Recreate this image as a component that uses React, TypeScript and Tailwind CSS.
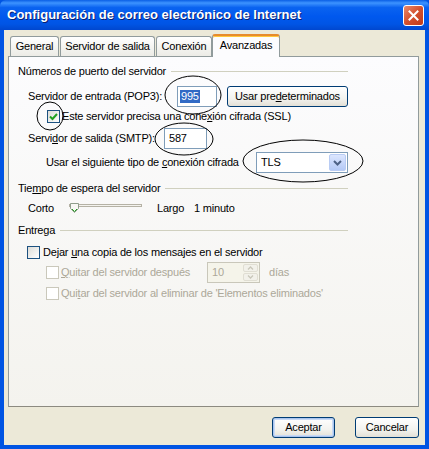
import React from "react";

function Check({ checked = false, disabled = false }: { checked?: boolean; disabled?: boolean }) {
  return (
    <span
      className={
        disabled
          ? "w-[13px] h-[13px] border border-[#CAC8BB] bg-white shrink-0 flex items-center justify-center"
          : "w-[13px] h-[13px] border border-[#1C5180] bg-[linear-gradient(135deg,#DCDCD7,#FFFFFF)] shrink-0 flex items-center justify-center"
      }
    >
      {checked && (
        <svg width="9" height="9" viewBox="0 0 9 9">
          <path d="M1 4.5 L3.5 7 L8 2" fill="none" stroke="#21A121" strokeWidth="2" />
        </svg>
      )}
    </span>
  );
}

function GroupTitle({ children, className = "" }: { children: React.ReactNode; className?: string }) {
  return (
    <div className={"h-[14px] flex items-center " + className}>
      <span className="whitespace-nowrap">{children}</span>
      <span className="flex-1 h-px bg-[#D0D0BF] ml-[5px]" />
    </div>
  );
}

function XpButton({ children, isDefault = false, className = "" }: { children: React.ReactNode; isDefault?: boolean; className?: string }) {
  return (
    <div
      className={
        "h-[21px] rounded-[3px] border border-[#003C74] bg-[linear-gradient(to_bottom,#FFFFFF,#F3F3EF_60%,#E3E0D6)] flex items-center justify-center " +
        (isDefault ? "shadow-[inset_0_0_0_1px_#A9C4EE,inset_0_0_0_2px_#C9DAF5] " : "") +
        className
      }
    >
      {children}
    </div>
  );
}

export default function App() {
  return (
    <div className="relative w-[429px] h-[449px] overflow-hidden bg-[#0054E3] flex flex-col font-['Liberation_Sans',Arial,sans-serif] text-[11px] tracking-[-0.2px] text-black">
      {/* Title bar */}
      <div className="h-[30px] shrink-0 flex items-center justify-between pl-[7px] pr-[5px] rounded-t-[6px] bg-[linear-gradient(to_bottom,#0A5FE5_0%,#3D93FF_10%,#0A63F0_25%,#0058EE_55%,#0055E5_80%,#0047CF_100%)]">
        <span className="text-white font-bold text-[13px] tracking-normal [text-shadow:1px_1px_0_#0A1E6E]">
          Configuración de correo electrónico de Internet
        </span>
        <div className="w-[21px] h-[21px] rounded-[3px] border border-white bg-[linear-gradient(135deg,#E98A6C,#D3502E_50%,#C23A19)] flex items-center justify-center">
          <svg width="11" height="11" viewBox="0 0 11 11">
            <path d="M1.5 1.5 L9.5 9.5 M9.5 1.5 L1.5 9.5" stroke="white" strokeWidth="2" strokeLinecap="square" />
          </svg>
        </div>
      </div>

      {/* Body */}
      <div className="flex-1 ml-[4px] mr-[4px] mb-[4px] bg-[#ECE9D8] flex flex-col">
        <div className="ml-[4px] mr-[6px] pt-[4px]">
          {/* Tabs */}
          <div className="relative z-10 h-[23px] flex items-end pl-[2px]">
            <div className="w-[49px] h-[20px] mb-[1px] border border-b-0 border-[#919B9C] rounded-t-[3px] bg-[linear-gradient(to_bottom,#FFFFFF,#F3F3EF_60%,#ECEBE6)] flex items-center justify-center">
              General
            </div>
            <div className="w-[95px] h-[20px] mb-[1px] ml-[1px] border border-b-0 border-[#919B9C] rounded-t-[3px] bg-[linear-gradient(to_bottom,#FFFFFF,#F3F3EF_60%,#ECEBE6)] flex items-center justify-center">
              Servidor de salida
            </div>
            <div className="w-[56px] h-[20px] mb-[1px] ml-[1px] border border-b-0 border-[#919B9C] rounded-t-[3px] bg-[linear-gradient(to_bottom,#FFFFFF,#F3F3EF_60%,#ECEBE6)] flex items-center justify-center">
              Conexión
            </div>
            <div className="w-[68px] h-[23px] border border-b-0 border-[#919B9C] border-t-[#E68B2C] border-t-2 rounded-t-[3px] bg-[#FCFCFE] shadow-[inset_0_1px_0_#FFC83C] flex items-center justify-center pb-[2px]">
              Avanzadas
            </div>
          </div>

          {/* Panel */}
          <div className="-mt-[1px] h-[351px] border border-[#919B9C] border-b-[#8C8A80] bg-[linear-gradient(to_bottom,#FCFCFE,#F4F3EE)]">
            <div className="w-[339px] pl-[9px] pt-[7px] flex flex-col">
              <GroupTitle>Números de puerto del servidor</GroupTitle>

              <div className="mt-[8px] h-[21px] flex items-center pl-[10px]">
                <span className="w-[149px]">Servidor de entrada (POP3):</span>
                <div className="w-[40px] h-[21px] border border-[#7F9DB9] bg-white flex items-center pl-[2px]">
                  <span className="bg-[#316AC5] text-white px-[1px] leading-[13px]">995</span>
                </div>
                <XpButton className="ml-[10px] w-[121px]">
                  <span>
                    Usar pre<span className="underline">d</span>eterminados
                  </span>
                </XpButton>
              </div>

              <div className="mt-[3px] h-[13px] flex items-center pl-[29px]">
                <Check checked />
                <span className="ml-[2px]">
                  Este servidor precisa una cone<span className="underline">x</span>ión cifrada (SSL)
                </span>
              </div>

              <div className="mt-[5px] h-[21px] flex items-center pl-[10px]">
                <span className="w-[136px]">
                  Servi<span className="underline">d</span>or de salida (SMTP):
                </span>
                <div className="w-[43px] h-[21px] border border-[#7F9DB9] bg-white flex items-center pl-[4px]">587</div>
              </div>

              <div className="mt-[3px] h-[21px] flex items-center pl-[28px]">
                <span className="w-[210px]">
                  Usar el siguiente tipo de <span className="underline">c</span>onexión cifrada
                </span>
                <div className="w-[92px] h-[21px] border border-[#7F9DB9] bg-white flex items-center justify-between pl-[4px] pr-[1px]">
                  <span>TLS</span>
                  <span className="w-[17px] h-[17px] rounded-[2px] border border-[#B9CCF4] bg-[linear-gradient(to_bottom,#DCE6FE,#B4C9F6)] flex items-center justify-center">
                    <svg width="9" height="6" viewBox="0 0 9 6">
                      <path d="M1 1 L4.5 4.5 L8 1" fill="none" stroke="#4D6185" strokeWidth="2" />
                    </svg>
                  </span>
                </div>
              </div>

              <GroupTitle className="mt-[8px]">
                Tie<span className="underline">m</span>po de espera del servidor
              </GroupTitle>

              <div className="mt-[6px] h-[14px] flex items-center pl-[10px]">
                <span className="w-[41px]">Corto</span>
                <svg width="73" height="12" viewBox="0 0 73 12">
                  <rect x="0.5" y="2.5" width="72" height="2" fill="#F4F3EE" stroke="#B5B2A5" strokeWidth="1" />
                  <path d="M1.5 1.5 H9.5 V6.5 L5.5 10.5 L1.5 6.5 Z" fill="#F7F7F4" stroke="#8F9D8B" strokeWidth="1" />
                  <path d="M3 7 L5.5 9.5 L8 7" fill="none" stroke="#21A121" strokeWidth="1" />
                </svg>
                <span className="ml-[15px] w-[37px]">Largo</span>
                <span>1 minuto</span>
              </div>

              <GroupTitle className="mt-[8px]">Entrega</GroupTitle>

              <div className="mt-[9px] h-[13px] flex items-center pl-[9px]">
                <Check />
                <span className="ml-[3px]">
                  Dejar <span className="underline">u</span>na copia de los mensajes en el servidor
                </span>
              </div>

              <div className="mt-[3px] h-[21px] flex items-center pl-[28px] text-[#ACA899]">
                <Check disabled />
                <span className="ml-[2px] w-[146px]">
                  <span className="underline">Q</span>uitar del servidor después
                </span>
                <div className="w-[53px] h-[21px] border border-[#C9C7BA] bg-[#F5F4EA] flex items-center justify-between pl-[4px] pr-[1px]">
                  <span>10</span>
                  <span className="w-[15px] h-[17px] flex flex-col gap-px">
                    <span className="flex-1 rounded-[2px] border border-[#E0DED3] bg-[#F2F1EA] flex items-center justify-center">
                      <svg width="7" height="4" viewBox="0 0 7 4"><path d="M1 3.5 L3.5 1 L6 3.5" fill="none" stroke="#C9C7BA" strokeWidth="1.3" /></svg>
                    </span>
                    <span className="flex-1 rounded-[2px] border border-[#E0DED3] bg-[#F2F1EA] flex items-center justify-center">
                      <svg width="7" height="4" viewBox="0 0 7 4"><path d="M1 0.5 L3.5 3 L6 0.5" fill="none" stroke="#C9C7BA" strokeWidth="1.3" /></svg>
                    </span>
                  </span>
                </div>
                <span className="ml-[9px]">días</span>
              </div>

              <div className="mt-[4px] h-[13px] flex items-center pl-[28px] text-[#ACA899]">
                <Check disabled />
                <span className="ml-[2px]">
                  Qui<span className="underline">t</span>ar del servidor al eliminar de 'Elementos eliminados'
                </span>
              </div>
            </div>
          </div>

          {/* Buttons */}
          <div className="mt-[10px] flex justify-end">
            <XpButton isDefault className="w-[63px]">Aceptar</XpButton>
            <XpButton className="ml-[20px] w-[64px]">Cancelar</XpButton>
          </div>
        </div>
      </div>

      {/* Hand-drawn annotation ellipses */}
      <svg className="absolute inset-0 pointer-events-none" width="429" height="449" viewBox="0 0 429 449">
        <ellipse cx="193" cy="95" rx="28" ry="19" fill="none" stroke="#000" strokeWidth="1" />
        <ellipse cx="50" cy="116" rx="13" ry="14" fill="none" stroke="#000" strokeWidth="1" />
        <ellipse cx="184" cy="139" rx="29" ry="16" fill="none" stroke="#000" strokeWidth="1" />
        <ellipse cx="303" cy="161" rx="60" ry="21" fill="none" stroke="#000" strokeWidth="1" />
      </svg>
    </div>
  );
}
